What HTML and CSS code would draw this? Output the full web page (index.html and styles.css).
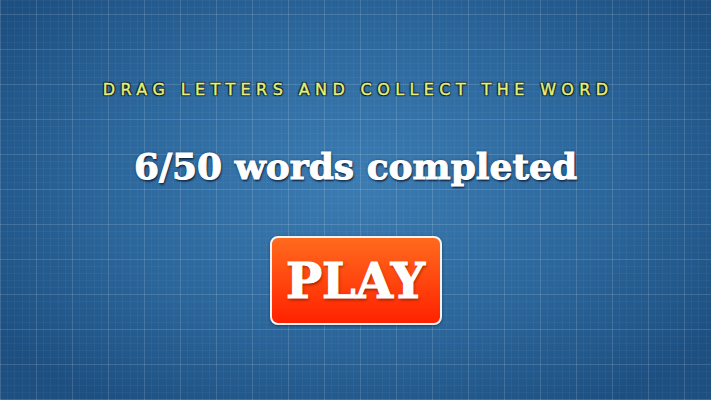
FILE: index.html
```html
<!DOCTYPE html>
<html>
<head>
<meta charset="utf-8">
<link rel="stylesheet" href="styles.css">
</head>
<body>
<main class="screen">
  <div class="hint">DRAG LETTERS AND COLLECT THE WORD</div>
  <div class="progress">6/50 words completed</div>
  <button class="play">PLAY</button>
</main>
</body>
</html>
```
FILE: styles.css
```css
html, body {
  margin: 0;
  padding: 0;
  width: 711px;
  height: 400px;
  overflow: hidden;
}
.screen {
  width: 711px;
  height: 400px;
  display: flex;
  flex-direction: column;
  align-items: center;
  box-sizing: border-box;
  padding-top: 81px;
  background-color: #2a6296;
  background-image:
    repeating-linear-gradient(90deg, rgba(255,255,255,0.11) 0 1px, transparent 1px 36px),
    repeating-linear-gradient(0deg, rgba(255,255,255,0.11) 0 1px, transparent 1px 35px),
    repeating-linear-gradient(90deg, rgba(255,255,255,0.035) 0 1px, transparent 1px 7.2px),
    repeating-linear-gradient(0deg, rgba(255,255,255,0.035) 0 1px, transparent 1px 7px),
    radial-gradient(ellipse 62% 68% at 50% 45%, #3b7cb2 0%, #2c679c 55%, #1d4f81 100%);
}
.hint {
  font-family: "DejaVu Sans", sans-serif;
  font-size: 16px;
  line-height: 18px;
  letter-spacing: 5.4px;
  margin-right: -5.4px;
  color: #e4f07a;
  -webkit-text-stroke: 0.4px #e4f07a;
  text-shadow: 1px 1px 1px #0e1e22, -1px -1px 1px #0e1e22, 1px -1px 1px #0e1e22, -1px 1px 1px #0e1e22;
}
.progress {
  margin-top: 47px;
  font-family: "DejaVu Serif", serif;
  font-weight: bold;
  font-size: 36px;
  line-height: 40px;
  color: #ffffff;
  -webkit-text-stroke: 1px #ffffff;
  text-shadow: 1px 2px 2px rgba(10,30,60,0.9), 0 0 3px rgba(10,30,60,0.8);
}
.play {
  margin-top: 50px;
  width: 172px;
  height: 89px;
  border: 2px solid #f4f4f4;
  border-radius: 8px;
  background: linear-gradient(180deg, #ff6a1e 0%, #ff4a10 45%, #ff2200 100%);
  font-family: "DejaVu Serif", serif;
  font-weight: bold;
  font-size: 48px;
  color: #ffffff;
  -webkit-text-stroke: 1.2px #ffffff;
  text-shadow: 1px 2px 3px rgba(120,20,0,0.7);
  padding: 0;
  box-shadow: 0 1px 3px rgba(0,0,0,0.4);
}
```
